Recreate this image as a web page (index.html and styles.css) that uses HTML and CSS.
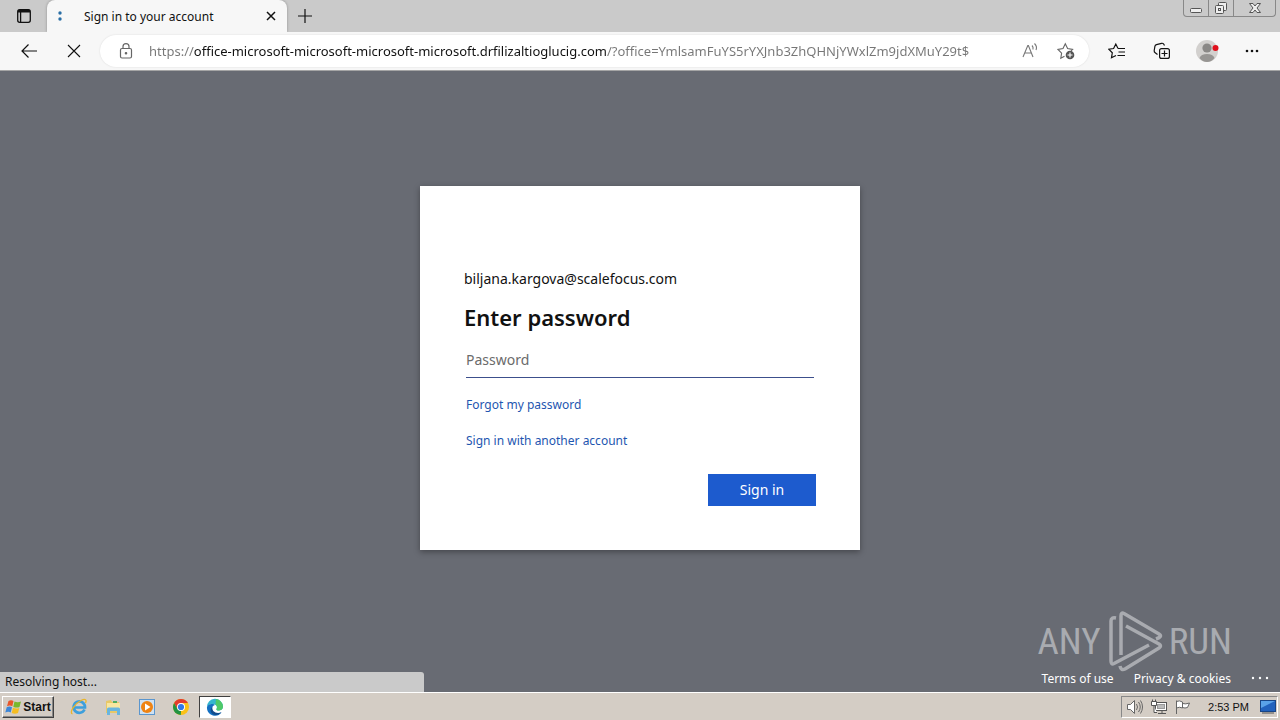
FILE: index.html
```html
<!DOCTYPE html>
<html lang="en">

<head>
    <meta charset="UTF-8">
    <meta name="viewport" content="width=device-width, initial-scale=1.0">
    <title>Sign in to your account</title>
    <link rel="stylesheet" href="styles.css">
</head>

<body>
    <!-- Tab strip -->
    <header class="tab-strip">
        <button class="tab-menu" type="button" aria-label="Tab actions">
            <svg width="16" height="16" viewBox="0 0 16 16" fill="none" stroke="#111" stroke-width="1.3">
                <rect x="1.7" y="1.7" width="12.6" height="12.6" rx="2" />
                <path d="M2 3.2h12" stroke-width="2.6" />
                <path d="M4.6 4v10" />
            </svg>
        </button>
        <div class="tab">
            <svg class="tab-icon" width="16" height="16" viewBox="0 0 16 16" fill="#2a6ea5">
                <circle cx="8" cy="5" r="1.7" />
                <circle cx="8" cy="11" r="1.7" />
            </svg>
            <span class="tab-title">Sign in to your account</span>
            <button class="tab-close" type="button" aria-label="Close tab">
                <svg width="10" height="10" viewBox="0 0 10 10" stroke="#111" stroke-width="1.5">
                    <path d="M1 1l8 8M9 1l-8 8" />
                </svg>
            </button>
        </div>
        <button class="new-tab" type="button" aria-label="New tab">
            <svg width="16" height="16" viewBox="0 0 16 16" stroke="#111" stroke-width="1.2">
                <path d="M8 1v14M1 8h14" />
            </svg>
        </button>
        <div class="window-buttons">
            <button type="button" aria-label="Minimize">
                <svg width="14" height="14" viewBox="0 0 14 14" fill="#eee" stroke="#555">
                    <rect x="1.5" y="7.5" width="11" height="4" rx="1" />
                </svg>
            </button>
            <button type="button" aria-label="Restore">
                <svg width="14" height="14" viewBox="0 0 14 14" fill="#eee" stroke="#555">
                    <rect x="4.5" y="1.5" width="8" height="8" rx="1" />
                    <rect x="1.5" y="4.5" width="8" height="8" rx="1" />
                    <rect x="4.5" y="7.5" width="2" height="2" />
                </svg>
            </button>
            <button class="window-close" type="button" aria-label="Close">
                <svg width="14" height="14" viewBox="0 0 14 14" fill="#eee" stroke="#555">
                    <path d="M1.5 2.5h3.5l2 2.5 2-2.5h3.5L9 7l3.5 4.5H9L7 9l-2 2.5H1.5L5 7z" />
                </svg>
            </button>
        </div>
    </header>

    <!-- Toolbar with the address bar -->
    <div class="toolbar">
        <button class="tool" type="button" aria-label="Back">
            <svg width="18" height="16" viewBox="0 0 18 16" fill="none" stroke="#111" stroke-width="1.2">
                <path d="M17 8H2M8.5 1.5L2 8l6.5 6.5" />
            </svg>
        </button>
        <button class="tool" type="button" aria-label="Stop">
            <svg width="14" height="14" viewBox="0 0 14 14" stroke="#111" stroke-width="1.1">
                <path d="M1 1l12 12M13 1L1 13" />
            </svg>
        </button>
        <div class="address-bar">
            <button class="bar-tool" type="button" aria-label="Site information">
                <svg width="14" height="16" viewBox="0 0 14 16" fill="none" stroke="#666" stroke-width="1.2">
                    <rect x="1.5" y="5.5" width="11" height="9.5" rx="1.5" />
                    <path d="M4 5.5V3.6a3 3 0 0 1 6 0v1.9" />
                    <circle cx="7" cy="10.2" r="0.7" fill="#666" />
                </svg>
            </button>
            <input class="url" type="text" aria-label="Address" spellcheck="false"
                value="https://office-microsoft-microsoft-microsoft-microsoft.drfilizaltioglucig.com/?office=YmlsamFuYS5rYXJnb3ZhQHNjYWxlZm9jdXMuY29t$">
            <button class="bar-tool" type="button" aria-label="Read aloud">
                <svg width="18" height="18" viewBox="0 0 18 18" fill="none" stroke="#777" stroke-width="1.1">
                    <path d="M2 15L6.8 3.5h.6L12 15M3.700 11h6.7" />
                    <path d="M11 3.5q1.5 1.5 1 4M13.5 1.5q3 3 1.5 6.5" />
                </svg>
            </button>
            <button class="bar-tool" type="button" aria-label="Add to favorites">
                <svg width="18" height="18" viewBox="0 0 18 18" fill="none" stroke="#666" stroke-width="1.1">
                    <path d="M7.5 14.2L3.8 16.2l.8-5L1 7.400l5-.8 2.300-4.800 2.300 4.800 5 .8-1.500 1.500" />
                    <circle cx="13" cy="13" r="4.3" fill="#555" stroke="none" />
                    <path d="M13 10.5v5M10.5 13h5" stroke="#fff" />
                </svg>
            </button>
        </div>
        <button class="tool" type="button" aria-label="Favorites">
            <svg width="18" height="18" viewBox="0 0 18 18" fill="none" stroke="#111" stroke-width="1.2">
                <path d="M10 6.5L7.800 2 5.600 6.5l-4.800.7 3.500 3.600-.8 5L8 13.5M10 6.5h7M10.5 10H17M9.5 13.5H17" />
            </svg>
        </button>
        <button class="tool" type="button" aria-label="Collections">
            <svg width="18" height="18" viewBox="0 0 18 18" fill="none" stroke="#111" stroke-width="1.2">
                <path d="M4.5 12.5L2.2 10.8Q1 10 1.2 8.5l.7-4.2Q2.1 3 3.5 2.6L8.5 1.3q1.5-.3 2.3 1l.7 1.2" />
                <rect x="6.6" y="6.6" width="9.8" height="9.8" rx="2" />
                <path d="M11.5 8.5v6M8.5 11.5h6" />
            </svg>
        </button>
        <button class="tool" type="button" aria-label="Profile">
            <svg width="24" height="24" viewBox="0 0 24 24">
                <circle cx="12" cy="12" r="11" fill="#d2d0ce" />
                <circle cx="12" cy="9" r="4.6" fill="#8a8886" />
                <path d="M4.5 19q1.500-4 7.500-4t7.500 4q-3 4-7.500 4t-7.500-4z" fill="#979593" />
                <circle cx="20.5" cy="9" r="3" fill="#e0101c" />
            </svg>
        </button>
        <button class="tool" type="button" aria-label="Settings and more">
            <svg width="16" height="16" viewBox="0 0 16 16" fill="#111">
                <circle cx="3" cy="8" r="1.3" />
                <circle cx="8" cy="8" r="1.3" />
                <circle cx="13" cy="8" r="1.3" />
            </svg>
        </button>
    </div>

    <!-- Sign-in page -->
    <div class="page">
        <main class="page-main">
            <form class="card">
                <div class="email">biljana.kargova@scalefocus.com</div>
                <h1>Enter password</h1>
                <input class="password" type="password" name="password" placeholder="Password" aria-label="Password">
                <a href="#">Forgot my password</a>
                <a href="#">Sign in with another account</a>
                <button class="submit" type="submit">Sign in</button>
            </form>
        </main>
        <footer class="page-footer">
            <a href="#">Terms of use</a>
            <a href="#">Privacy &amp; cookies</a>
            <a class="more" href="#" aria-label="More">
                <svg width="18" height="4" viewBox="0 0 18 4" fill="#fff">
                    <circle cx="2" cy="2" r="1.2" />
                    <circle cx="9" cy="2" r="1.2" />
                    <circle cx="16" cy="2" r="1.2" />
                </svg>
            </a>
        </footer>
        <div class="watermark">
            <span>ANY</span>
            <svg width="56" height="64" viewBox="0 0 56 64" fill="none" stroke="currentColor" stroke-width="3.5" stroke-linejoin="round">
                <path d="M9 9Q4 8 4 12v40q0 4 3 2.500L42 36" />
                <path d="M14 46V7q0-4 3-2.500l35 20.500q4 2.500-3 5" />
                <path d="M19 17l33 18q3 2 0 4L18 60q-4 2-5-3" />
            </svg>
            <span>RUN</span>
        </div>
        <div class="status">Resolving host...</div>
    </div>

    <!-- Taskbar -->
    <div class="taskbar">
        <button class="start" type="button">
            <svg width="17" height="16" viewBox="0 0 17 16">
                <path d="M3.5 2Q6 .5 8.5 2L7.3 7.2Q5 5.8 2 7.2z" fill="#e8562a" />
                <path d="M9.5 2.5q3 1.5 6.5 0L14.5 8Q11.5 9.3 8.3 7.7z" fill="#79b82e" />
                <path d="M1.7 8.2q2.8-1.4 5.3 0L5.7 13.5Q3.5 12 .3 13.5z" fill="#3c86d8" />
                <path d="M8 8.7q3 1.5 6.3.3L13 14q-3 1.5-6.3 0z" fill="#f5bd22" />
            </svg>
            Start
        </button>
        <nav class="launchers">
            <button type="button" aria-label="Internet Explorer">
                <svg width="18" height="18" viewBox="0 0 18 18" fill="none">
                    <path d="M14.5 11.5A5.7 5.7 0 1 1 15 9.5H5" stroke="#3d9fdc" stroke-width="2.7" />
                    <path d="M2.5 16C-1 15 4 6 11 2.5c4.5-2.2 6-.5 4.5 2.5" stroke="#e9b52b" stroke-width="1.3" />
                </svg>
            </button>
            <button type="button" aria-label="Explorer">
                <svg width="18" height="18" viewBox="0 0 18 18">
                    <path d="M2 3l5-1 1 2h7v11H2z" fill="#e8c867" />
                    <path d="M3 5h13v8H3z" fill="#f8e6a0" />
                    <path d="M9 3h4v2H9z" fill="#51ad62" />
                    <path d="M3 17v-6q0-1.5 1.5-1.5h10Q16 9.5 16 11v6h-3v-4H6v4z" fill="#69b5df" />
                </svg>
            </button>
            <button type="button" aria-label="Media Player">
                <svg width="18" height="18" viewBox="0 0 18 18">
                    <rect x="1.5" y="1.5" width="15" height="15" fill="#cfe1f2" stroke="#5b96ce" />
                    <circle cx="9" cy="9" r="6" fill="#ef8313" />
                    <path d="M7 5.5v7L12.5 9z" fill="#fff" />
                </svg>
            </button>
            <button type="button" aria-label="Chrome">
                <svg width="18" height="18" viewBox="0 0 18 18">
                    <circle cx="9" cy="9" r="8" fill="#fbc116" />
                    <path d="M2.07 5A8 8 0 0 1 15.93 5H9L5.5 11z" fill="#e33b2e" />
                    <path d="M2.07 5L5.5 11l3.5 2L8.8 17A8 8 0 0 1 2.07 5z" fill="#229342" />
                    <circle cx="9" cy="9" r="4" fill="#fff" />
                    <circle cx="9" cy="9" r="3.1" fill="#3278e8" />
                </svg>
            </button>
            <button class="running" type="button" aria-label="Edge">
                <svg width="18" height="18" viewBox="0 0 18 18">
                    <path d="M1 9a8 8 0 0 1 16-.5c0 3-2.5 4-4.5 4-1.5 0-2.5-.7-2-1.5 1.5-2.5-1-5-4-5C3.5 6 1.5 7.5 1 9z" fill="#35b6ce" />
                    <path d="M10 1a8 8 0 0 1 7 7.5c0 3-2.5 4-4.5 4-1.5 0-2.5-.7-2-1.5 1-1.7.5-3.5-1-4.3z" fill="#4fc968" />
                    <path d="M1 9c.7-2.5 3-3.3 5.5-3 1 0 2 .5 2.5 1-2.5.5-3.5 3-2.5 5.5 1.3 3 5 4 9 1.8A8 8 0 0 1 1 9z" fill="#1470c2" />
                    <path d="M6.3 9c-.7 4 3.2 7.3 9.2 5.3-3 3.5-8 3.3-10 .7C4 13 4.5 10.5 6.3 9z" fill="#124c8c" />
                </svg>
            </button>
        </nav>
        <div class="tray">
            <svg width="18" height="16" viewBox="0 0 18 16" fill="#fff" stroke="#666">
                <path d="M1.5 5.5h3l4-4v13l-4-4h-3z" />
                <path d="M10.5 5q2 3 0 6M12.5 3q3.5 5 0 10M14.5 1.5q4 6.5 0 13" fill="none" />
            </svg>
            <svg width="18" height="16" viewBox="0 0 18 16" fill="#fff" stroke="#555">
                <rect x="5.5" y="3.5" width="11" height="8" />
                <rect x="7.5" y="5.5" width="7" height="4" fill="#bbb" stroke="#999" />
                <path d="M8 14.5h8M12 12v2M1.5 2.5h5v4h-5zM2.5.5v2M5.5.5v2M4 7v6.5h3" />
            </svg>
            <svg width="18" height="16" viewBox="0 0 18 16" fill="#fff" stroke="#666">
                <path d="M2.5 15V1.5M2.5 2.5q3-1.5 6 .5v6q-3-1.5-6 0M8.5 4.5q3 1 7-.5l-2 4.5q-2.5 1-5 0" />
            </svg>
            <time>2:53 PM</time>
            <svg width="16" height="14" viewBox="0 0 16 14">
                <rect x="0.5" y="0.5" width="15" height="11" fill="#2262bd" stroke="#184586" />
                <path d="M1 1h14L1 8z" fill="#5aa2e8" />
                <path d="M2 13h12" stroke="#555" />
            </svg>
        </div>
    </div>
</body>

</html>
```

FILE: styles.css
```css
* {
    box-sizing: border-box;
}

body {
    display: flex;
    flex-direction: column;
    min-height: 100vh;
    margin: 0;
    font-family: "Noto Sans", "Open Sans", sans-serif;
    font-size: 12px;
    color: #111;
}

button,
input {
    font: inherit;
    color: inherit;
    border: none;
    padding: 0;
    background: none;
}

button {
    display: flex;
    align-items: center;
    justify-content: center;
}

svg {
    display: block;
    flex: none;
}

a {
    color: #1e56b0;
    text-decoration: none;
}

/* Tab strip */
.tab-strip {
    display: flex;
    height: 32px;
    background: #cacaca;
}

.tab-menu {
    width: 47px;
}

.tab {
    display: flex;
    align-items: center;
    gap: 16px;
    width: 240px;
    padding: 0 10px 0 5px;
    border-radius: 8px 8px 0 0;
    background: #f7f7f7;
    box-shadow: 0 0 3px rgba(0, 0, 0, 0.3);
}

.tab-title {
    flex: 1;
}

.tab-close {
    width: 12px;
    height: 16px;
}

.new-tab {
    width: 36px;
}

.window-buttons {
    display: flex;
    height: 17px;
    margin: 0 4px 0 auto;
    border: 1px solid #888;
    border-top: none;
    border-radius: 0 0 4px 4px;
}

.window-buttons button {
    width: 25px;
    border-right: 1px solid #888;
}

.window-buttons .window-close {
    width: 41px;
    border-right: none;
}

/* Toolbar */
.toolbar {
    display: flex;
    align-items: center;
    height: 39px;
    padding: 0 6px;
    border-bottom: 1px solid #a5a5a5;
    background: #f7f7f7;
    position: relative;
}

.tool {
    width: 45px;
    height: 32px;
}

.address-bar {
    display: flex;
    flex: 1;
    align-items: center;
    height: 32px;
    margin: 0 5px 0 4px;
    padding: 0 5px 0 8px;
    border-radius: 16px;
    background: #fff;
    box-shadow: 0 0 2px rgba(0, 0, 0, 0.12);
}

.bar-tool {
    width: 36px;
    height: 30px;
}

/* The host part of the address is darker than the rest */
.url {
    flex: 1;
    min-width: 0;
    margin-left: 5px;
    font-size: 13px;
    color: transparent;
    background: linear-gradient(to right, #767676 45px, #111 45px, #111 457px, #767676 457px);
    -webkit-background-clip: text;
    background-clip: text;
    outline: none;
}

/* Sign-in page */
.page {
    position: relative;
    display: flex;
    flex: 1;
    flex-direction: column;
    background: #686b73;
}

.page-main {
    display: flex;
    flex: 1;
    align-items: center;
    justify-content: center;
}

.card {
    display: flex;
    flex-direction: column;
    align-items: flex-start;
    width: 100%;
    max-width: 440px;
    padding: 83px 44px 44px;
    background: #fff;
    box-shadow: 0 2px 6px rgba(0, 0, 0, 0.35);
}

.email {
    font-size: 14px;
    line-height: 20px;
}

.card h1 {
    margin: 12px 0 13px;
    font-size: 22px;
    font-weight: 600;
    line-height: 32px;
}

.password {
    align-self: stretch;
    height: 32px;
    margin: 0 2px;
    padding-bottom: 4px;
    border-bottom: 1px solid #3c4f8c;
    font-size: 14px;
    outline: none;
}

.password::placeholder {
    color: #6b6b6b;
}

.card a {
    margin: 18px 2px 0;
    line-height: 18px;
}

.submit {
    align-self: flex-end;
    width: 108px;
    height: 32px;
    margin-top: 24px;
    font-size: 14px;
    color: #fff;
    background: #1d5bce;
}

.page-footer {
    display: flex;
    align-items: center;
    justify-content: flex-end;
    gap: 20px;
    height: 28px;
    padding-right: 11px;
}

.page-footer a {
    color: #fff;
}

.watermark {
    position: absolute;
    right: 48px;
    bottom: 19px;
    display: flex;
    align-items: center;
    gap: 6px;
    font-family: "Roboto Condensed", "Liberation Sans", sans-serif;
    font-size: 37px;
    color: #a9abb0;
}

.status {
    position: absolute;
    left: 0;
    bottom: 0;
    width: 424px;
    max-width: 100%;
    height: 20px;
    padding-left: 5px;
    border-radius: 0 3px 0 0;
    line-height: 20px;
    background: #cacaca;
}

/* Taskbar */
.taskbar {
    display: flex;
    align-items: center;
    height: 28px;
    padding: 0 2px;
    border-top: 1px solid #fff;
    background: #d4cdc5;
}

.start {
    gap: 1px;
    width: 52px;
    height: 22px;
    border: 1px solid;
    border-color: #fff #404040 #404040 #fff;
    font-family: "Liberation Sans", sans-serif;
    font-weight: bold;
    box-shadow: inset -1px -1px #888;
}

.launchers {
    display: flex;
    flex: 1;
    gap: 2px;
    padding-left: 9px;
}

.launchers button {
    width: 32px;
    height: 22px;
}

.launchers .running {
    border: 1px solid;
    border-color: #404040 #fff #fff #404040;
    background: #fff;
}

.tray {
    display: flex;
    align-items: center;
    gap: 6px;
    height: 22px;
    padding: 0 1px 0 4px;
    border: 1px solid;
    border-color: #888 #fff #fff #888;
    font-family: "Liberation Sans", sans-serif;
    font-size: 11px;
}

.tray time {
    padding: 0 5px 0 10px;
}
```
